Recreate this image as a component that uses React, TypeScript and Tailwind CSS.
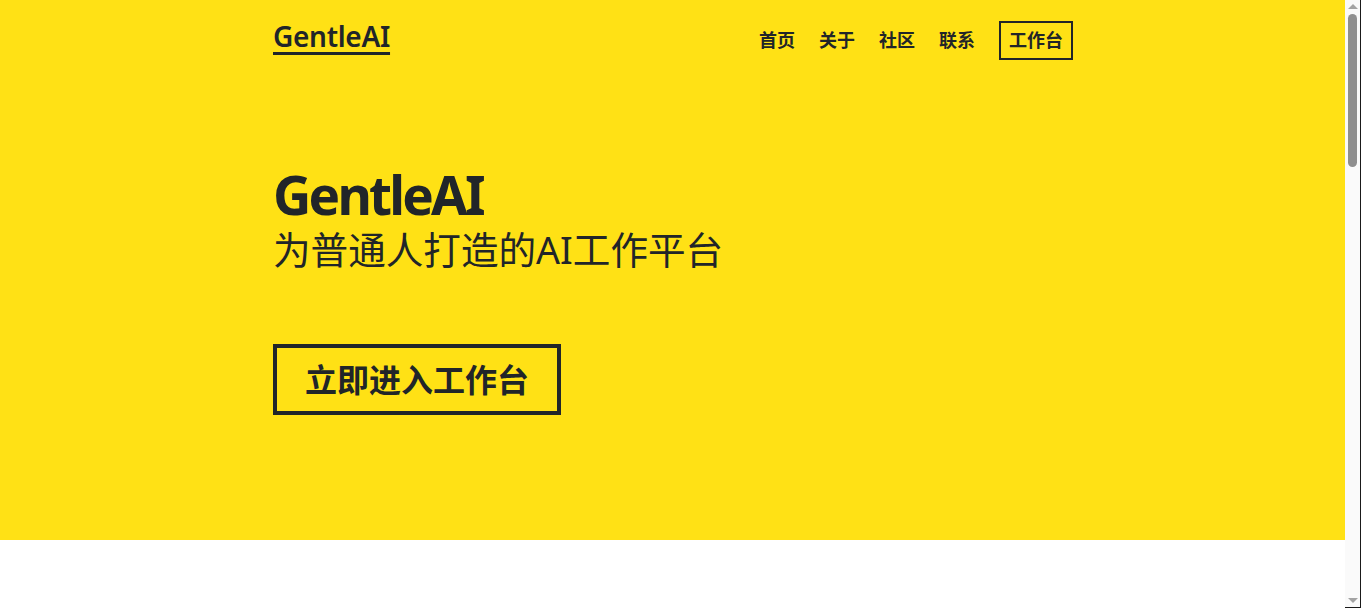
export default function App() {
  const links = ['首页', '关于', '社区', '联系'];
  return (
    <div
      className="min-h-[2300px] bg-white pr-[15px] text-[#212529]"
      style={{ fontFamily: '"Noto Sans", "Noto Sans CJK SC", sans-serif' }}
    >
      <section className="h-[540px] bg-[#ffe115]">
        <div className="mx-auto w-[800px]">
          <header className="flex items-start justify-between pt-[21px]">
            <a className="mt-[-3px] text-[28px] font-semibold leading-[36px] tracking-[-0.3px] underline decoration-[3px] underline-offset-[5px]">
              GentleAI
            </a>
            <nav className="flex items-center gap-6 text-[18px] font-bold">
              {links.map((l) => (
                <a key={l} className="leading-[39px]">
                  {l}
                </a>
              ))}
              <a className="border-2 border-[#212529] px-2 leading-[35px]">工作台</a>
            </nav>
          </header>

          <div className="pt-[105px]">
            <h1 className="text-[53px] font-bold leading-[60px] tracking-[-2.8px]">GentleAI</h1>
            <p className="text-[37.6px] leading-[50px]">为普通人打造的AI工作平台</p>
            <a className="mt-[69px] inline-block border-4 border-[#212529] px-7 text-[32px] font-bold leading-[63px]">
              立即进入工作台
            </a>
          </div>
        </div>
      </section>
      <section className="h-[1760px]" />

      {/* window scrollbar + frame edge */}
      <div className="fixed top-0 right-0 flex h-screen w-[16px] flex-col items-center border-r border-b border-[#1a1a1a] bg-[#fafafa]">
        <div className="mt-[4px] h-0 w-0 border-x-[5px] border-b-[5px] border-x-transparent border-b-[#a3a3a3]" />
        <div className="mt-[5px] h-[153px] w-[9px] rounded-full bg-[#8f8f8f]" />
        <div className="mt-auto mb-[4px] h-0 w-0 border-x-[5px] border-t-[5px] border-x-transparent border-t-[#a3a3a3]" />
      </div>
    </div>
  );
}
